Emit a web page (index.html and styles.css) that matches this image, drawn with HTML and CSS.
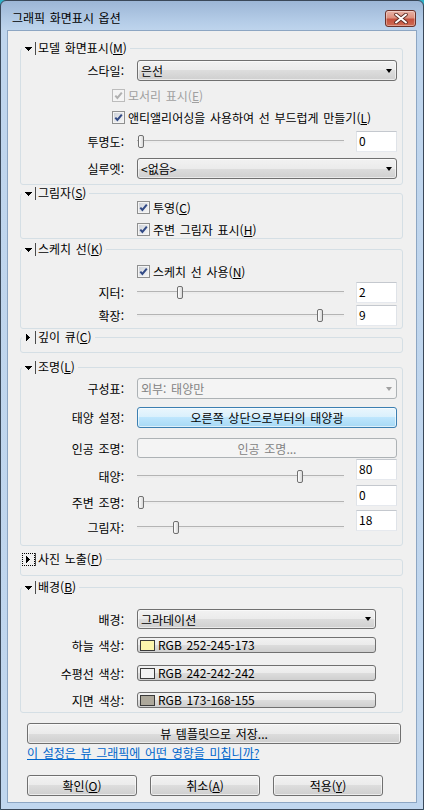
FILE: index.html
```html
<!DOCTYPE html>
<html lang="ko">
<head>
<meta charset="utf-8">
<title>그래픽 화면표시 옵션</title>
<link rel="stylesheet" href="styles.css">
</head>
<body>
<div class="window">
  <div class="titlebar">
    <span class="title">그래픽 화면표시 옵션</span>
    <span class="close"><svg width="14" height="11" viewBox="0 0 14 11"><path d="M2 1.5 L12 9.5 M12 1.5 L2 9.5" stroke="#5a2a22" stroke-width="3.6" stroke-linecap="round"/><path d="M2 1.5 L12 9.5 M12 1.5 L2 9.5" stroke="#fff" stroke-width="2" stroke-linecap="round"/></svg></span>
  </div>
  <div class="client">

    <section class="group g1">
      <div class="ghead"><span class="ghead-in"><span class="exp"><svg width="13" height="13" viewBox="0 0 13 13" shape-rendering="crispEdges"><path d="M3 5h7v1h-1v1h-1v1h-1v1h-1v-1h-1v-1h-1v-1h-1z"/></svg></span><span class="gbar"></span><span class="gtitle">모델 화면표시(<u>M</u>)</span></span></div>
      <div class="row r-style"><span class="lbl">스타일:</span><div class="combo">은선<span class="arrow"></span></div></div>
      <div class="row full r-edge"><span class="chkline pad-model disabled"><span class="chk"></span>모서리 표시(<u>E</u>)</span></div>
      <div class="row full r-aa"><span class="chkline pad-model"><span class="chk"></span>앤티앨리어싱을 사용하여 선 부드럽게 만들기(<u>L</u>)</span></div>
      <div class="row r-trans"><span class="lbl">투명도:</span><div class="sliderline"><div class="slider"><span class="thumb" style="--pos:1px"></span></div><div class="edit">0</div></div></div>
      <div class="row r-sil"><span class="lbl">실루엣:</span><div class="combo">&lt;없음&gt;<span class="arrow"></span></div></div>
    </section>

    <section class="group g2">
      <div class="ghead"><span class="ghead-in"><span class="exp"><svg width="13" height="13" viewBox="0 0 13 13" shape-rendering="crispEdges"><path d="M3 5h7v1h-1v1h-1v1h-1v1h-1v-1h-1v-1h-1v-1h-1z"/></svg></span><span class="gbar"></span><span class="gtitle">그림자(<u>S</u>)</span></span></div>
      <div class="row r-c1"><span class="lbl"></span><span class="chkline"><span class="chk"></span>투영(<u>C</u>)</span></div>
      <div class="row r-c2"><span class="lbl"></span><span class="chkline"><span class="chk"></span>주변 그림자 표시(<u>H</u>)</span></div>
    </section>

    <section class="group g3">
      <div class="ghead"><span class="ghead-in"><span class="exp"><svg width="13" height="13" viewBox="0 0 13 13" shape-rendering="crispEdges"><path d="M3 5h7v1h-1v1h-1v1h-1v1h-1v-1h-1v-1h-1v-1h-1z"/></svg></span><span class="gbar"></span><span class="gtitle">스케치 선(<u>K</u>)</span></span></div>
      <div class="row r-s1"><span class="lbl"></span><span class="chkline"><span class="chk"></span>스케치 선 사용(<u>N</u>)</span></div>
      <div class="row r-s2"><span class="lbl">지터:</span><div class="sliderline"><div class="slider"><span class="thumb" style="--pos:40px"></span></div><div class="edit">2</div></div></div>
      <div class="row r-s3"><span class="lbl">확장:</span><div class="sliderline"><div class="slider"><span class="thumb" style="--pos:180px"></span></div><div class="edit">9</div></div></div>
    </section>

    <section class="group g4 collapsed">
      <div class="ghead"><span class="ghead-in"><span class="exp"><svg width="13" height="13" viewBox="0 0 13 13" shape-rendering="crispEdges"><path d="M4 3h1v1h1v1h1v1h1v1h-1v1h-1v1h-1v1h-1z"/></svg></span><span class="gbar"></span><span class="gtitle">깊이 큐(<u>C</u>)</span></span></div>
    </section>

    <section class="group g5">
      <div class="ghead"><span class="ghead-in"><span class="exp"><svg width="13" height="13" viewBox="0 0 13 13" shape-rendering="crispEdges"><path d="M3 5h7v1h-1v1h-1v1h-1v1h-1v-1h-1v-1h-1v-1h-1z"/></svg></span><span class="gbar"></span><span class="gtitle">조명(<u>L</u>)</span></span></div>
      <div class="row r-l1"><span class="lbl">구성표:</span><div class="combo disabled">외부: 태양만<span class="arrow"></span></div></div>
      <div class="row r-l2"><span class="lbl">태양 설정:</span><div class="btn hot">오른쪽 상단으로부터의 태양광</div></div>
      <div class="row r-l3"><span class="lbl">인공 조명:</span><div class="btn disabled">인공 조명...</div></div>
      <div class="row low r-l4"><span class="lbl">태양:</span><div class="sliderline"><div class="slider"><span class="thumb" style="--pos:160px"></span></div><div class="edit">80</div></div></div>
      <div class="row low r-l5"><span class="lbl">주변 조명:</span><div class="sliderline"><div class="slider"><span class="thumb" style="--pos:1px"></span></div><div class="edit">0</div></div></div>
      <div class="row low r-l6"><span class="lbl">그림자:</span><div class="sliderline"><div class="slider"><span class="thumb" style="--pos:36px"></span></div><div class="edit">18</div></div></div>
    </section>

    <section class="group g6 collapsed">
      <div class="ghead"><span class="ghead-in"><span class="exp focus"><svg width="13" height="13" viewBox="0 0 13 13" shape-rendering="crispEdges"><path d="M4 3h1v1h1v1h1v1h1v1h-1v1h-1v1h-1v1h-1z"/></svg></span><span class="gbar"></span><span class="gtitle">사진 노출(<u>P</u>)</span></span></div>
    </section>

    <section class="group g7">
      <div class="ghead"><span class="ghead-in"><span class="exp"><svg width="13" height="13" viewBox="0 0 13 13" shape-rendering="crispEdges"><path d="M3 5h7v1h-1v1h-1v1h-1v1h-1v-1h-1v-1h-1v-1h-1z"/></svg></span><span class="gbar"></span><span class="gtitle">배경(<u>B</u>)</span></span></div>
      <div class="row narrow r-b1"><span class="lbl">배경:</span><div class="combo">그라데이션<span class="arrow"></span></div></div>
      <div class="row narrow r-b2"><span class="lbl">하늘 색상:</span><div class="cbtn"><span class="swatch" style="background:rgb(252,245,173)"></span>RGB 252-245-173</div></div>
      <div class="row narrow r-b3"><span class="lbl">수평선 색상:</span><div class="cbtn"><span class="swatch" style="background:rgb(242,242,242)"></span>RGB 242-242-242</div></div>
      <div class="row narrow r-b4"><span class="lbl">지면 색상:</span><div class="cbtn"><span class="swatch" style="background:rgb(173,168,155)"></span>RGB 173-168-155</div></div>
    </section>

    <div class="btn save">뷰 템플릿으로 저장...</div>
    <a class="link" href="#">이 설정은 뷰 그래픽에 어떤 영향을 미칩니까?</a>
    <div class="actions">
      <div class="btn act">확인(<u>O</u>)</div>
      <div class="btn act">취소(<u>A</u>)</div>
      <div class="btn act">적용(<u>Y</u>)</div>
    </div>
  </div>
</div>
</body>
</html>
```

FILE: styles.css
```css
* { box-sizing: border-box; }
html, body { margin: 0; padding: 0; }
body {
  width: 424px;
  height: 810px;
  background: #2fb0c8;
  font-family: "Noto Sans CJK KR", "Noto Sans", sans-serif;
  font-size: 12px;
  line-height: 15px;
  word-spacing: 1.3px;
  color: #000;
}
u { text-decoration: underline; text-underline-offset: 1px; }

.window {
  width: 424px;
  height: 810px;
  display: flex;
  flex-direction: column;
  border: 1px solid #3a4859;
  border-radius: 6px 6px 0 0;
  background: linear-gradient(to bottom, #9cb6d6 0, #b4cce7 20px, #bfd5ed 30px, #c0d6ee 100%);
  padding: 0 6px 6px;
}

.titlebar {
  height: 29px;
  flex: none;
  display: flex;
  align-items: flex-start;
  justify-content: space-between;
  padding: 0 1px 0 5px;
}
.title { margin-top: 9px; line-height: 15px; color: #000; }
.close {
  margin-top: 9px;
  width: 31px;
  height: 17px;
  border: 1px solid #6b3129;
  border-radius: 3px;
  background: linear-gradient(to bottom, #e8b2a6 0, #dd907e 45%, #c4503d 55%, #cf6d55 100%);
  box-shadow: inset 0 0 0 1px rgba(255,255,255,.35);
  display: flex;
  align-items: center;
  justify-content: center;
}

.client {
  flex: 1;
  background: #f0f0f0;
  border: 1px solid #8da6c3;
  display: flex;
  flex-direction: column;
}

/* group boxes */
.group {
  margin: 0 13px 0 12px;
  border: 1px solid #d5dfe5;
  border-radius: 3px;
  display: flex;
  flex-direction: column;
}
.g1 { margin-top: 17px; padding-bottom: 5px; }
.g2 { margin-top: 8px; padding-bottom: 1px; }
.g3 { margin-top: 10px; padding-bottom: 2px; }
.g4 { margin-top: 8px; padding-bottom: 8px; }
.g5 { margin-top: 14px; padding-bottom: 10px; }
.g6 { margin-top: 13px; padding-bottom: 9px; }
.g7 { margin-top: 11px; padding-bottom: 4px; }

.ghead {
  height: 14px;
  margin: -8px 0 0 1px;
  display: flex;
}
.ghead-in {
  display: flex;
  align-items: center;
  background: #f0f0f0;
  padding-right: 3px;
  height: 14px;
}
.exp { width: 13px; height: 13px; display: block; }
.exp svg { display: block; fill: #000; }
.exp.focus { outline: 1px dotted #000; outline-offset: -1px; }
.gbar { width: 1px; height: 13px; background: #4a4a4a; margin-left: 0; }
.gtitle { margin-left: 2px; line-height: 14px; }

/* rows */
.row {
  display: grid;
  grid-template-columns: 103px 260px;
  column-gap: 13px;
  align-items: center;
}
.row.narrow { grid-template-columns: 103px 239px; }
.row.full { grid-template-columns: 1fr; height: 15px; }
.row.low { align-items: end; height: 25px; }
.row.low .lbl { height: 15px; }
.row.low .sliderline { align-items: flex-start; height: 25px; }
.row.low .slider { margin-top: 10px; }
.lbl { text-align: right; white-space: nowrap; line-height: 15px; }

.r-style { margin-top: 5px; }
.r-edge { margin-top: 7px; }
.r-aa { margin-top: 7px; }
.r-trans { margin-top: 6px; }
.r-sil { margin-top: 6px; }
.r-c1 { margin-top: 0; height: 15px; }
.r-c2 { margin-top: 7px; height: 15px; }
.r-s1 { margin-top: 8px; height: 15px; }
.r-s2 { margin-top: 3px; }
.r-s3 { margin-top: 2px; }
.r-l1 { margin-top: 4px; }
.r-l2 { margin-top: 8px; }
.r-l3 { margin-top: 10px; }
.r-l4 { margin-top: 1px; }
.r-l5 { margin-top: 1px; }
.r-l6 { margin-top: 0; }
.r-b1 { margin-top: 15px; }
.r-b2 { margin-top: 8px; }
.r-b3 { margin-top: 12px; }
.r-b4 { margin-top: 11px; }

/* checkbox */
.chkline { display: flex; align-items: center; height: 15px; white-space: nowrap; }
.pad-model { padding-left: 91px; }
.chk {
  width: 13px;
  height: 13px;
  flex: none;
  margin-right: 3px;
  border: 1px solid #8e8f8f;
  background:
    url("data:image/svg+xml,%3Csvg xmlns='http://www.w3.org/2000/svg' width='11' height='11'%3E%3Cpath d='M2.3 5.6 L4.4 8 L8.8 2.6' fill='none' stroke='%23324a86' stroke-width='2'/%3E%3C/svg%3E") center / 11px 11px no-repeat,
    linear-gradient(135deg, #c9ced6 0%, #e6e8eb 55%, #f6f6f6 100%);
  box-shadow: inset 0 0 0 1px #f4f4f4;
}
.disabled { color: #a0a0a0; }
.chkline.disabled .chk {
  border-color: #bcbcbc;
  background:
    url("data:image/svg+xml,%3Csvg xmlns='http://www.w3.org/2000/svg' width='11' height='11'%3E%3Cpath d='M2.3 5.6 L4.4 8 L8.8 2.6' fill='none' stroke='%23b0b0b0' stroke-width='2'/%3E%3C/svg%3E") center / 11px 11px no-repeat,
    #f4f4f4;
}

/* combo */
.combo {
  height: 21px;
  border: 1px solid #707070;
  border-radius: 3px;
  background: linear-gradient(to bottom, #f2f2f2 0%, #ebebeb 50%, #dddddd 50%, #cfcfcf 100%);
  box-shadow: inset 0 0 0 1px rgba(255,255,255,.55);
  display: flex;
  align-items: center;
  padding-left: 3px;
  white-space: nowrap;
}
.r-b1 .combo { height: 20px; }
.combo .arrow {
  margin-left: auto;
  margin-right: 4px;
  width: 0;
  height: 0;
  border-left: 3.5px solid transparent;
  border-right: 3.5px solid transparent;
  border-top: 4px solid #000;
}
.combo.disabled {
  border-color: #adb2b5;
  background: #f4f4f4;
  box-shadow: none;
  color: #838383;
}
.combo.disabled .arrow { border-top-color: #a0a0a0; }

/* buttons */
.btn {
  height: 21px;
  border: 1px solid #707070;
  border-radius: 3px;
  background: linear-gradient(to bottom, #f2f2f2 0%, #ebebeb 50%, #dddddd 50%, #cfcfcf 100%);
  box-shadow: inset 0 0 0 1px rgba(255,255,255,.6);
  display: flex;
  align-items: center;
  justify-content: center;
  white-space: nowrap;
}
.btn.hot {
  border-color: #3c7fb1;
  background: linear-gradient(to bottom, #eaf6fd 0%, #d9f0fc 50%, #bee6fd 50%, #a7d9f5 100%);
}
.btn.disabled {
  height: 20px;
  border-color: #adb2b5;
  background: #f4f4f4;
  box-shadow: none;
  color: #838383;
}

.cbtn {
  height: 16px;
  border: 1px solid #707070;
  border-radius: 3px;
  background: linear-gradient(to bottom, #f2f2f2 0%, #ebebeb 50%, #dddddd 50%, #cfcfcf 100%);
  display: flex;
  align-items: center;
  padding-left: 2px;
  white-space: nowrap;
  line-height: 14px;
}
.swatch {
  width: 15px;
  height: 11px;
  border: 1px solid #3a3a3a;
  margin-right: 3px;
  flex: none;
}

/* slider + edit */
.sliderline { display: flex; align-items: center; justify-content: space-between; }
.slider { position: relative; width: 207px; height: 15px; }
.slider::before {
  content: "";
  position: absolute;
  left: 0;
  right: 0;
  top: 6px;
  height: 2px;
  border-top: 1px solid #b4b4b4;
  background: #ececec;
}
.thumb {
  position: absolute;
  top: 1px;
  left: var(--pos);
  width: 6px;
  height: 13px;
  border: 1px solid #707070;
  border-radius: 2px;
  background: linear-gradient(to right, #ffffff, #d8d8d8);
}
.edit {
  width: 41px;
  height: 21px;
  background: #fff;
  border: 1px solid;
  border-color: #c4c8ce #dfe3e8 #e6e9ee #dfe3e8;
  padding: 1px 0 0 2px;
  line-height: 15px;
}

/* bottom */
.save { margin: 10px 15px 0 19px; }
.link {
  margin: 1px 0 0 19px;
  color: #0066cc;
  text-decoration: underline;
  line-height: 15px;
  align-self: flex-start;
}
.actions { display: flex; gap: 13px; margin: 15px 0 0 19px; }
.act { width: 110px; }
```
